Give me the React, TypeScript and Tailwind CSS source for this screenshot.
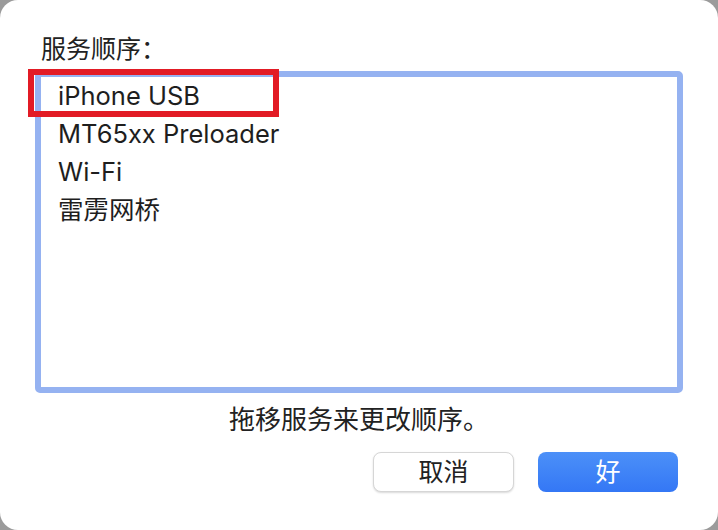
import React from "react";

const font = { fontFamily: "Inter, 'Noto Sans CJK SC', sans-serif" };

const services = ["iPhone USB", "MT65xx Preloader", "Wi-Fi", "雷雳网桥"];

export default function App() {
  return (
    <div className="h-[530px] w-[718px] overflow-hidden bg-[#9b9b9b]" style={font}>
      <div className="flex h-full w-full flex-col rounded-[18px] bg-white pl-[35px] pr-[35px] pt-[33px] text-[#222222]">
        {/* title */}
        <div className="ml-[6px] text-[25px] leading-[32px]">服务顺序：</div>

        {/* service list */}
        <div className="relative mt-[6px] h-[322px] w-[648px] rounded-[5px] border-[6px] border-[#95b2f1] bg-white">
          {services.map((s) => (
            <div key={s} className="pl-[17px] text-[25.5px] leading-[38px] text-[#1e1e1e]">
              {s}
            </div>
          ))}
          {/* highlight box */}
          <div className="absolute left-[-13px] top-[-8px] h-[48px] w-[251px] border-[6px] border-[#e21b25]" />
        </div>

        <div className="mt-[11px] text-center text-[26px] leading-[32px]">拖移服务来更改顺序。</div>

        {/* buttons */}
        <div className="mt-[16px] flex justify-end gap-[24px] pr-[5px]">
          <button className="h-[40px] w-[141px] rounded-[8px] border border-[#d6d6d6] bg-white text-[25px] leading-none text-[#222222] shadow-[0_1px_2px_rgba(0,0,0,0.15)]">
            取消
          </button>
          <button className="h-[40px] w-[140px] rounded-[8px] bg-gradient-to-b from-[#4c90f8] to-[#3477f5] text-[25px] leading-none text-white">
            好
          </button>
        </div>
      </div>
    </div>
  );
}
